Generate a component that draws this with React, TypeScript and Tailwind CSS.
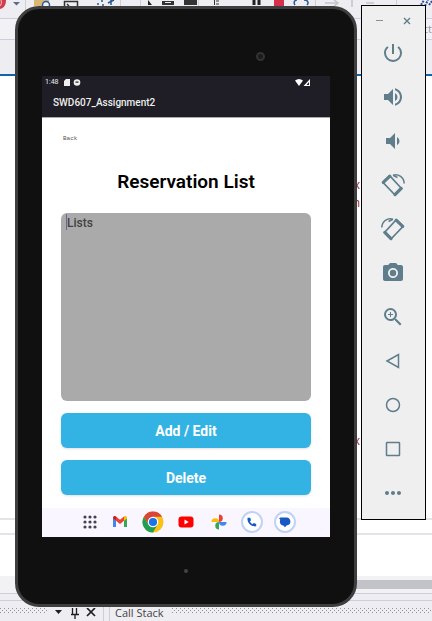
import type { ReactNode } from "react";
import { MdPowerSettingsNew, MdVolumeUp, MdVolumeDown, MdPhotoCamera, MdZoomIn, MdMoreHoriz } from "react-icons/md";

function DragHandle({ id, className }: { id: string; className: string }) {
  return (
    <svg className={className} aria-hidden="true">
      <defs>
        <pattern id={id} width="4" height="4" patternUnits="userSpaceOnUse">
          <path d="M0 0h1v1H0ZM2 2h1v1H2Z" fill="#94949c" />
        </pattern>
      </defs>
      <rect width="100%" height="100%" fill={`url(#${id})`} />
    </svg>
  );
}

function RotateIcon({ flip = false }: { flip?: boolean }) {
  return (
    <svg viewBox="0 0 24 24" className={flip ? "size-6 -scale-x-100" : "size-6"} fill="none" stroke="currentColor">
      <path d="M2 9.500 9 3 20.500 15.500 14 22Z" strokeWidth="1.800" strokeLinejoin="round" />
      <path d="M2.300 9.300 8.800 3.200M14 21.600l6.200-6.200" strokeWidth="3.200" strokeLinecap="round" />
      <path d="M12 2.300C17.500.500 23 4.500 23.200 10.500M12 2.300l4.500 2.200" strokeWidth="1.500" />
    </svg>
  );
}

function Tool({ label, children }: { label: string; children: ReactNode }) {
  return (
    <button type="button" aria-label={label} className="flex h-11 w-full items-center justify-center">
      {children}
    </button>
  );
}

function ToolbarGlyphs() {
  return (
    <svg className="h-[18px] w-[432px] shrink-0" viewBox="0 0 432 18" fill="none">
      <path d="M0 0h6c0 5-2 8-6 9Z" fill="#d23c4c" />
      <path d="M1 0c1 3 0 5-1 6" stroke="#f3c3c8" />
      <path d="M13 2h7l-3.500 3.500Z" fill="#5c6a8c" />
      <path d="M25.500 0v18M120.500 0v18M140.500 0v18M198.500 0v18M315.500 0v18M396.500 0v18" stroke="#cccedb" />
      <path d="M34 0h15v6H34Z" fill="#d8b775" />
      <circle cx="46" cy="5" r="3.500" stroke="#26599b" strokeWidth="1.500" fill="#eef4ff" />
      <path d="M64.500 1.500h13V8h-13ZM67 4l2 2" stroke="#333" strokeWidth="1.500" />
      <path d="M97 4h2M101 1h2M102 5h2M108 3l6-3M111 0v5" stroke="#26599b" strokeWidth="1.500" />
      <path d="m148 0 4 5h-4Z" fill="#222" />
      <path d="M162 1h12v4h-12ZM184 0h13v5h-13Z" fill="#333" />
      <path d="M165 2.500h6" stroke="#eee" />
      <path d="M214.500 0v5M216 1h3M216 4h3" stroke="#333" />
      <path d="M254 0v5M259 0v5" stroke="#222" strokeWidth="3" />
      <path d="M274 0h10v6h-10Z" fill="#d8304b" />
      <path d="M295 5c-2-3 0-5 2-5M304 0c4 0 5 3 3 5" stroke="#26599b" strokeWidth="1.500" />
      <path d="M325 3h13M334 0l4 3-4 3M352 0v7M366 3h8" stroke="#c4c4ca" strokeWidth="1.500" />
      <path d="m421 5 3-5M425 6l3-6M429 5l3-4" stroke="#334da0" strokeWidth="2" strokeDasharray="2 1" />
    </svg>
  );
}

function Background() {
  return (
    <div className="absolute inset-0 flex flex-col overflow-hidden bg-white font-['Open_Sans',sans-serif] text-[11px] text-[#444]">
      <div className="flex h-[19px] overflow-hidden border-b border-[#cccedb] bg-[#eeeef2]">
        <ToolbarGlyphs />
      </div>
      <div className="flex h-[21px] items-center justify-end border-b border-[#cccedb] bg-[#f1f1f6] text-[#999]">
        <span>ct</span>
      </div>
      <div className="h-9 border-b-2 border-[#0f65ab] bg-[#eeeef2]" />
      <div className="flex flex-1 flex-col items-end pr-[72px] pt-[101px] text-xs text-[#a31515]">
        <span className="h-[18px]">x</span>
        <span className="h-[238px]">n</span>
        <span>x</span>
      </div>
      <div className="h-[17px] border-y-2 border-[#e4e4e8]" />
      <div className="h-[41px]" />
      <div className="h-[18px] border-b border-[#cccedb] bg-[#f2f2f4] pt-1">
        <div className="ml-auto h-[9px] w-1/4 bg-[#c2c3c9]" />
      </div>
      <div className="h-[7px] border-b border-[#cccedb] bg-[#eeeef2]" />
      <div className="flex h-5 bg-[#eeeef2] pt-1">
        <DragHandle id="panel-handle-left" className="mt-[3px] h-[6px] w-12 shrink-0" />
        <div className="flex h-full min-w-0 flex-1 pl-[7px]">
          <svg className="mt-[3px] h-3 w-11 shrink-0" viewBox="0 0 44 12" fill="none" stroke="#1e1e1e">
            <path d="M0 2h7L3.500 6Z" fill="#1e1e1e" stroke="none" />
            <path d="M17.500 0v6M21.500 0v6M16 6.500h8M20 7v4" strokeWidth="1.300" />
            <path d="m32 0 8 8m0-8-8 8" strokeWidth="1.700" />
          </svg>
          <span className="ml-1 h-full w-[7px] shrink-0 border-x border-[#cccedb]" />
          <span className="ml-[5px] mr-2 whitespace-nowrap leading-4">Call Stack</span>
          <DragHandle id="panel-handle-right" className="mt-[3px] h-[6px] min-w-0 flex-1" />
        </div>
      </div>
    </div>
  );
}

function Dock() {
  return (
    <nav aria-label="Dock" className="flex h-[29px] items-center justify-center gap-[9px] bg-[#f9f6ff] pb-px">
      <button type="button" aria-label="All apps" className="size-6">
        <svg viewBox="0 0 24 24" fill="#45424f">
          {[7, 12, 17].map((y) => [10, 15, 20].map((x) => <circle key={`${x}-${y}`} cx={x} cy={y} r="1.600" />))}
        </svg>
      </button>
      <button type="button" aria-label="Gmail" className="size-6">
        <svg viewBox="0 0 24 24">
          <path d="M5 8v9h3V10.500Z" fill="#4285f4" />
          <path d="M16 10.500V17h3V8Z" fill="#34a853" />
          <path d="M5 8.500V8c0-2 2-2.500 3-1.500v4.300Z" fill="#c5221f" />
          <path d="m8 6.500 4 3.300 4-3.300v4.300l-4 3.200-4-3.200Z" fill="#ea4335" />
          <path d="M16 6.500c1-1 3-.500 3 1.500v.500l-3 2.300Z" fill="#fbbc04" />
        </svg>
      </button>
      <button type="button" aria-label="Chrome" className="size-6">
        <svg viewBox="0 0 24 24">
          <circle cx="12" cy="12" r="10.500" fill="#fbc116" />
          <path d="M2.900 6.750A10.500 10.500 0 0 1 21.100 6.750H12L7.450 14.600Z" fill="#db4437" />
          <path d="M2.900 6.750A10.500 10.500 0 0 0 12 22.500l4.550-7.900h-9.100Z" fill="#1e9f54" />
          <circle cx="12" cy="12" r="5.300" fill="#fff" />
          <circle cx="12" cy="12" r="4.100" fill="#1a73e8" />
        </svg>
      </button>
      <button type="button" aria-label="YouTube" className="size-6">
        <svg viewBox="0 0 24 24">
          <rect x="4.500" y="6.500" width="15" height="11" rx="3" fill="#f00" />
          <path d="m10.500 9.500 4.200 2.500-4.200 2.500Z" fill="#fff" />
        </svg>
      </button>
      <button type="button" aria-label="Photos" className="size-6">
        <svg viewBox="0 0 24 24">
          <path d="M12 12V4.500a3.750 3.750 0 0 1 0 7.500Z" fill="#ea4335" />
          <path d="M12 12h7.500a3.750 3.750 0 0 1-7.500 0Z" fill="#4285f4" />
          <path d="M12 12v7.500a3.750 3.750 0 0 1 0-7.500Z" fill="#34a853" />
          <path d="M12 12H4.500a3.750 3.750 0 0 1 7.500 0Z" fill="#fbbc04" />
        </svg>
      </button>
      <button type="button" aria-label="Phone" className="size-6">
        <svg viewBox="0 0 24 24">
          <circle cx="12" cy="12" r="10" fill="#fff" stroke="#bfd2f6" strokeWidth="2" />
          <path d="M7.500 7.700c-.5 5.500 3.500 9.300 8.700 8.600v-2.400l-2.500-.8-1.200 1.100c-1.200-.6-2.100-1.500-2.600-2.700l1.100-1.200-.8-2.600Z" fill="#1857c4" />
        </svg>
      </button>
      <button type="button" aria-label="Messages" className="size-6">
        <svg viewBox="0 0 24 24">
          <circle cx="12" cy="12" r="10" fill="#fff" stroke="#bfd2f6" strokeWidth="2" />
          <path d="M6 8.300 7.500 7.500h6c5 0 5.500 7.800 0 8l-1.500 1.700-1.700-1.700C7 15 6.300 12 7.300 9.800Z" fill="#1857c4" />
        </svg>
      </button>
    </nav>
  );
}

function Tablet() {
  return (
    <main className="flex min-w-0 flex-1 flex-col rounded-[24px] border-[3px] border-[#3e3e3e] bg-[#101010] px-6">
      <div className="flex h-[67px] items-center justify-center pl-[148px] pt-7">
        <span className="size-[9px] rounded-full border-2 border-[#333] bg-[#1c1c1c]" />
      </div>
      <div className="flex h-[461px] flex-col bg-white">
        <header className="h-[42px] border-b border-[#aaa] bg-[#1f1d25] text-[#eee]">
          <div className="flex h-3 items-center gap-[5px] pl-[3px] pr-5 text-[7px]">
            <span>1:48</span>
            <svg className="h-[7px] w-[18px]" viewBox="0 0 18 7" fill="#eee">
              <path d="M2 0h4v7H0V2Z" />
              <circle cx="13" cy="3.500" r="3.300" />
              <path d="M11.500 2.500h3v1.200h-3Z" fill="#1f1d25" />
            </svg>
            <svg className="ml-auto h-[7px] w-[15px]" viewBox="0 0 15 7" fill="#fff">
              <path d="M0 1.500Q4-1.500 8 1.500L4 7Z" />
              <path d="M15 0v7H8.500Zm-1 3-2.500 3H14Z" fillRule="evenodd" />
            </svg>
          </div>
          <div className="flex h-[29px] items-center pl-[11px] text-[10px] font-medium">SWD607_Assignment2</div>
        </header>
        <section className="flex flex-1 flex-col px-[19px] pt-3">
          <button type="button" className="ml-[2px] h-4 self-start font-['Liberation_Mono',monospace] text-[6px] text-[#555]">
            Back
          </button>
          <h1 className="mt-6 text-center text-[19px] font-semibold leading-6 text-black">
            <label htmlFor="reservations">Reservation List</label>
          </h1>
          <div className="relative mt-[19px] h-[188px]">
            <textarea
              id="reservations"
              defaultValue="Lists"
              className="block size-full resize-none rounded-md bg-[#aaa] px-[6px] py-[2px] text-xs font-medium text-[#424242] outline-none"
            />
            <span className="absolute left-[5px] top-px h-4 w-px bg-[#6a659b]" />
          </div>
          <div className="mt-3 flex flex-col gap-3">
            {["Add / Edit", "Delete"].map((label) => (
              <button
                key={label}
                type="button"
                className="h-[35px] rounded-md bg-[#33b3e4] pt-px text-[14px] font-bold text-white shadow-sm"
              >
                {label}
              </button>
            ))}
          </div>
        </section>
        <Dock />
      </div>
      <div className="flex h-[67px] items-center justify-center">
        <span className="size-1 rounded-full bg-[#444]" />
      </div>
    </main>
  );
}

function EmulatorControls() {
  return (
    <aside className="-mt-px h-[515px] w-[65px] shrink-0 border border-black bg-[#efefef] pr-px text-[#5f7d8b]">
      <div className="flex h-[25px] items-center justify-center gap-[17px] pt-1">
        <button type="button" aria-label="Minimize" className="flex size-[10px] items-center justify-center">
          <span className="h-px w-[7px] bg-[#84929a]" />
        </button>
        <button type="button" aria-label="Close" className="size-[10px]">
          <svg viewBox="0 0 10 10" stroke="currentColor" strokeWidth="1.400">
            <path d="m2 2 6 6m0-6-6 6" />
          </svg>
        </button>
      </div>
      <Tool label="Power"><MdPowerSettingsNew size={24} /></Tool>
      <Tool label="Volume up"><MdVolumeUp size={24} /></Tool>
      <Tool label="Volume down"><MdVolumeDown size={24} /></Tool>
      <Tool label="Rotate left"><RotateIcon /></Tool>
      <Tool label="Rotate right"><RotateIcon flip /></Tool>
      <Tool label="Take screenshot"><MdPhotoCamera size={24} /></Tool>
      <Tool label="Zoom"><MdZoomIn size={24} /></Tool>
      <Tool label="Back">
        <svg className="size-4" viewBox="0 0 16 16" fill="none" stroke="currentColor" strokeWidth="1.500">
          <path d="M2 8 13.500 1.500v13Z" />
        </svg>
      </Tool>
      <Tool label="Home">
        <svg className="size-4" viewBox="0 0 16 16" fill="none" stroke="currentColor" strokeWidth="1.500">
          <circle cx="8" cy="8" r="6.500" />
        </svg>
      </Tool>
      <Tool label="Overview">
        <svg className="size-4" viewBox="0 0 16 16" fill="none" stroke="currentColor" strokeWidth="1.500">
          <rect x="1.500" y="1.500" width="13" height="13" rx="0.500" />
        </svg>
      </Tool>
      <Tool label="More"><MdMoreHoriz size={24} /></Tool>
    </aside>
  );
}

export default function App() {
  return (
    <div className="relative min-h-screen overflow-hidden font-['Roboto',sans-serif]">
      <Background />
      <div className="relative flex items-start gap-1 pb-[13px] pl-[15px] pr-[6px] pt-[6px]">
        <Tablet />
        <EmulatorControls />
      </div>
    </div>
  );
}
